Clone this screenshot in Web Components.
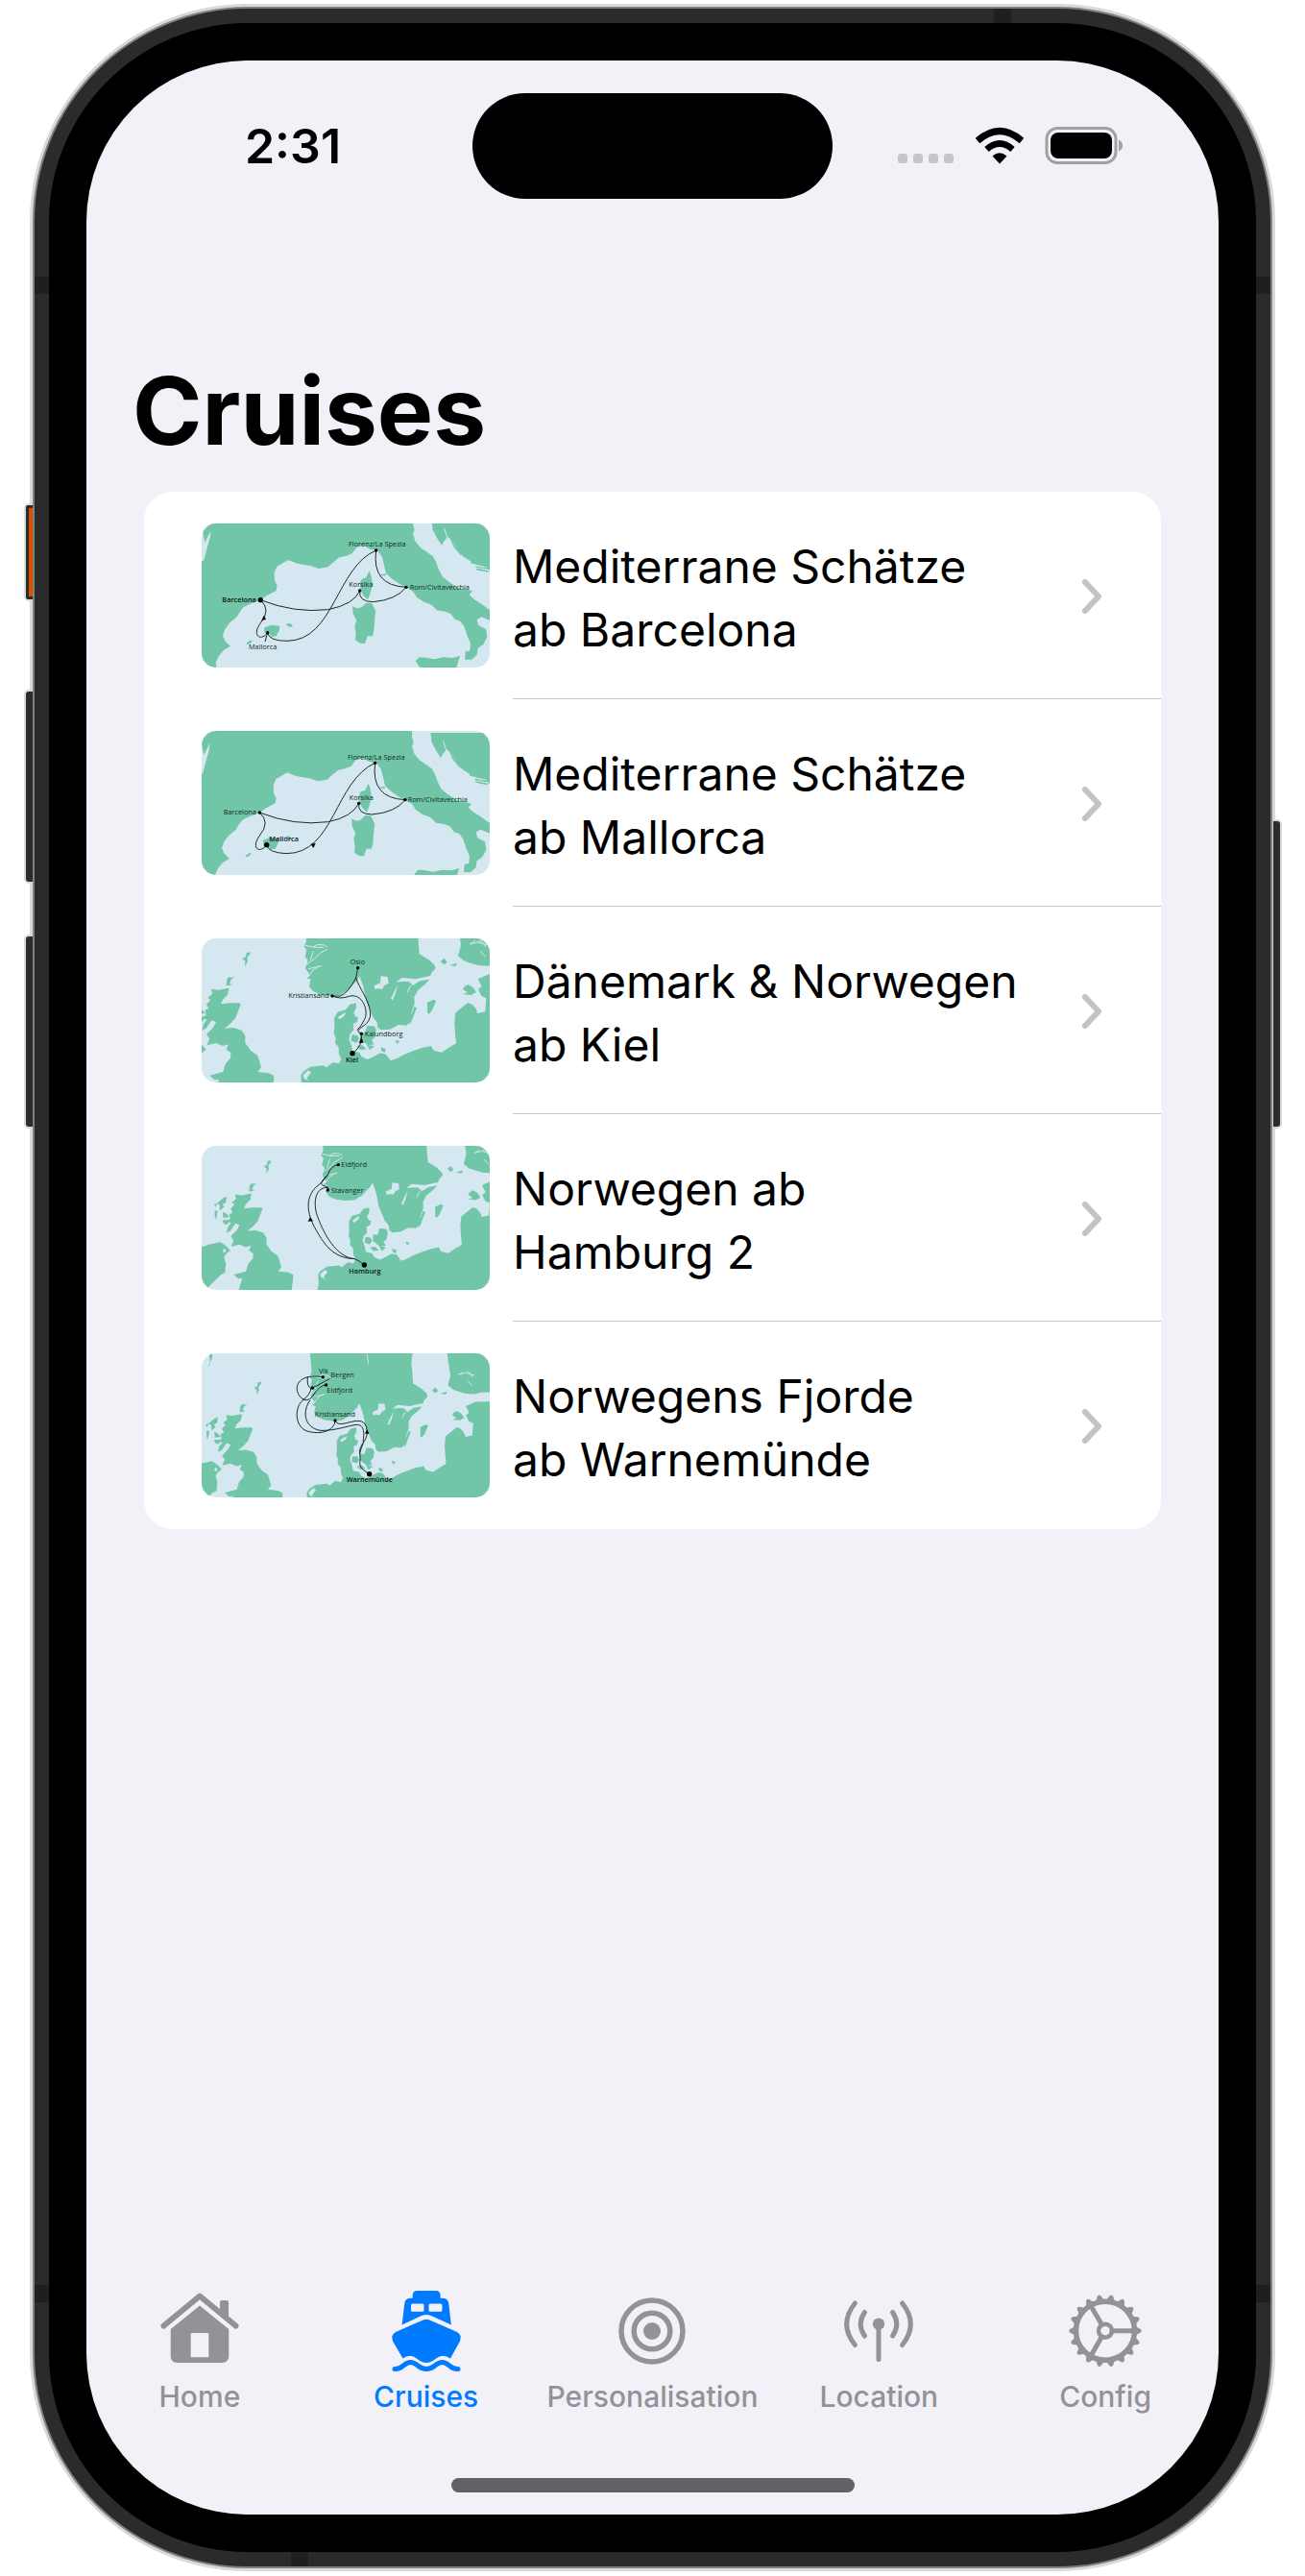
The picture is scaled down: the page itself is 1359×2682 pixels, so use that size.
<!DOCTYPE html>
<html lang="de">
<head>
<meta charset="utf-8">
<meta name="viewport" content="width=device-width, initial-scale=1">
<title>Cruises</title>
<style>
  body { margin: 0; background: #fff; color: #000; font-family: Inter, "Liberation Sans", sans-serif; }
</style>
</head>
<body>
<phone-frame>
  <status-bar slot="status">2:31</status-bar>
  <cruise-page heading="Cruises">
    <cruise-row map="barcelona">Mediterrane Schätze<br>ab Barcelona</cruise-row>
    <cruise-row map="mallorca">Mediterrane Schätze<br>ab Mallorca</cruise-row>
    <cruise-row map="kiel">Dänemark &amp; Norwegen<br>ab Kiel</cruise-row>
    <cruise-row map="hamburg">Norwegen ab<br>Hamburg 2</cruise-row>
    <cruise-row map="warnemuende">Norwegens Fjorde<br>ab Warnemünde</cruise-row>
  </cruise-page>
  <tab-bar slot="tabs">
    <tab-item icon="home">Home</tab-item>
    <tab-item icon="ship" active>Cruises</tab-item>
    <tab-item icon="target">Personalisation</tab-item>
    <tab-item icon="antenna">Location</tab-item>
    <tab-item icon="gear">Config</tab-item>
  </tab-bar>
</phone-frame>
<script>
function component(name, render) {
  customElements.define(name, class extends HTMLElement {
    constructor() {
      super();
      this.attachShadow({ mode: 'open' });
    }
    connectedCallback() {
      this.shadowRoot.innerHTML = render(this);
    }
  });
}

component('phone-frame', () => `
  <style>
    :host { display: flex; box-sizing: border-box; min-height: 100vh; padding: 9px 36px 10px; }
    .body { position: relative; flex: 1; display: flex; border: 15px solid #2b2b2b; border-radius: 222px; background: #2b2b2b;
      box-shadow: 0 0 0 2px #808080, 0 0 0 5px #d8dada; }
    .bezel { flex: 1; display: flex; padding: 39px; background: #000; border-radius: 207px; }
    .screen { flex: 1; min-width: 0; display: flex; flex-direction: column; background: #f2f1f7; border-radius: 168px; overflow: hidden; }
    main { flex: 1; }
    .band { position: absolute; background: #1f1f1f; }
    .side { width: 15px; height: 18px; }
    .cap { width: 18px; height: 15px; }
    .left { left: -15px; } .right { right: -15px; }
    .high { top: 264px; } .low { bottom: 260px; }
    .key { position: absolute; box-sizing: border-box; width: 7px; left: -24px; background: #2b2b2b; border-radius: 3px 0 0 3px; box-shadow: 0 0 0 2px #d8dada; clip-path: inset(-3px 0 -3px -3px); }
    .action { top: 502px; height: 98px; border: solid #2b2b2b; border-width: 3px 0 3px 3px; background: #d45500; }
    .up { top: 696px; height: 198px; }
    .down { top: 951px; height: 198px; }
    .power { left: auto; right: -25px; top: 831px; height: 318px; border-radius: 0 3px 3px 0; clip-path: inset(-3px -3px -3px 0); }
  </style>
  <div class="body">
    <i class="band side left high"></i><i class="band side right high"></i>
    <i class="band side left low"></i><i class="band side right low"></i>
    <i class="band cap" style="top:-15px;right:255px"></i><i class="band cap" style="bottom:-15px;left:252px"></i>
    <i class="key action"></i><i class="key up"></i><i class="key down"></i><i class="key power"></i>
    <div class="bezel"><div class="screen">
      <slot name="status"></slot><main><slot></slot></main><slot name="tabs"></slot>
    </div></div>
  </div>`);

component('status-bar', () => `
  <style>
    :host { display: grid; grid-template-columns: 1fr 375px 1fr; align-items: center; padding-top: 34px; }
    time { padding-left: 28px; text-align: center; font-size: 50px; line-height: 60px; font-weight: 600; }
    .island { height: 110px; border-radius: 55px; background: #000; }
    svg { display: block; justify-self: center; margin-right: 34px; }
  </style>
  <time><slot></slot></time>
  <div class="island"></div>
  <svg width="240" height="42" viewBox="0 0 240 42" aria-hidden="true">
    <g fill="#c4c4c9"><rect x="4" y="29" width="10" height="10" rx="3"/><rect x="20" y="29" width="10" height="10" rx="3"/><rect x="36" y="29" width="10" height="10" rx="3"/><rect x="52" y="29" width="10" height="10" rx="3"/></g>
    <path d="M110 39.500 L102.500 31.500 Q110 25 117.500 31.500 Z"/>
    <path d="M96.500 24.500 Q110 12.500 123.500 24.500" fill="none" stroke="#000" stroke-width="6.500"/>
    <path d="M87 15.500 Q110 -4.500 133 15.500" fill="none" stroke="#000" stroke-width="7"/>
    <rect x="159" y="2.500" width="72" height="36" rx="11" fill="none" stroke="#a0a0a5" stroke-width="3"/>
    <rect x="163" y="7" width="64" height="27" rx="8"/>
    <path d="M234 14.500 Q238 16 238 20.500 Q238 25 234 26.500 Z" fill="#a0a0a5"/>
  </svg>`);

component('cruise-page', el => `
  <style>
    :host { display: block; padding-top: 161px; }
    h1 { margin: 0; padding: 0 48px 24px; font-size: 98px; line-height: 120px; font-weight: 700; }
    .card { display: grid; margin: 0 60px; background: #fff; border-radius: 30px; overflow: hidden; }
  </style>
  <h1>${el.getAttribute('heading')}</h1>
  <div class="card"><slot></slot></div>`);

component('cruise-row', el => `
  <style>
    :host { display: block; --line: #c8c8cb; }
    :host(:last-child) { --line: transparent; }
    a { display: flex; gap: 24px; padding-left: 60px; height: 216px; color: inherit; text-decoration: none; }
    route-map { align-self: center; }
    .text { flex: 1; display: flex; align-items: center; justify-content: space-between; padding: 2px 60px 0 0; border-bottom: 1px solid var(--line);
      font-size: 48px; line-height: 66px; }
    .name { padding-top: 4px; }
  </style>
  <a href="#${el.getAttribute('map')}">
    <route-map name="${el.getAttribute('map')}"></route-map>
    <span class="text"><span class="name"><slot></slot></span>
      <svg width="24" height="40" viewBox="0 0 24 40" aria-hidden="true"><path d="M5 5 L19 20 L5 35" fill="none" stroke="#c3c3c6" stroke-width="6" stroke-linecap="round" stroke-linejoin="round"/></svg>
    </span>
  </a>`);

/* Coastlines are kept once per region; each route shifts and scales them. */
const med = `
  <g fill="#72c6a8" stroke="none">
  <path d="M20 -10H690V33L695 50L690 62L697 85L713 105L735 120L752 132L762 150L770 172L782 196L803 213L830 230L855 236L876 241L866 253L880 266L905 282L925 297L950 312V352L935 335L905 322L890 330L895 348L918 360L922 385L910 408L893 420L890 440L874 455L852 456L854 430L868 428L870 405L860 382L850 352L838 335L822 330L808 312L790 305L765 301L748 284L722 274L702 260L690 242L668 229L645 217L625 203L606 185L600 160L594 135L580 115L556 110L535 99L515 104L500 124L480 132L460 136L440 152L425 166L395 171L370 162L345 158L325 154L301 144L285 153L265 165L257 182L258 208L266 224L263 240L232 256L213 270L185 280L160 292L148 308L140 322L118 340L103 360L96 380L104 398L120 413L98 426L84 444L74 465L80 500H20V152L37 145L46 110L56 75L60 45L70 32L55 60L40 90Z"/>
  <path d="M748 20H960V182L932 180L918 164L888 158L870 148L848 134L828 110L817 88L800 72L788 84L780 98L765 75L752 50Z"/>
  <path d="M554 178L560 195L564 222L556 250L549 268L537 257L527 240L524 217L530 204L544 199Z"/>
  <path d="M501 288L515 295L530 292L544 278L561 279L574 304L571 325L568 365L564 382L548 382L540 405L525 404L510 394L512 375L508 350L514 333L503 311Z"/>
  <path d="M225 356L246 347L274 350L272 365L263 382L249 384L238 370L227 373ZM292 345L307 342L315 352L305 354ZM170 404L182 395L188 396L182 405L171 408Z"/>
  <path d="M698 460L710 448L730 449L755 454L785 448L814 450L838 443L832 460L820 500H770L745 480L712 480ZM590 190L605 187L606 193L590 193Z"/>
  </g>
  <g fill="none" stroke="#72c6a8" stroke-width="5"><path d="M785 42L796 62L808 75L820 103L842 128M800 47L812 67M833 118L852 127M870 151L916 163M887 165L925 171M889 173L926 180M68 35L82 58"/></g>
  <g fill="none" stroke="#d5e7f1" stroke-width="3"><path d="M788 45L803 95M865 155L912 167"/></g>`;
const north = `
  <g fill="#72c6a8" stroke="none">
  <path d="M115 188L82 194L60 191L63 207L49 218L58 225L45 239L52 253L40 257L44 272L33 282L46 287L35 302L31 320L44 314L61 289L75 294L66 311L45 332L55 346L46 367L75 360L96 369L114 364L107 380L121 390L120 407L104 425L97 450L75 456L55 461L70 475L84 473L70 520H250L255 480L256 462L240 454L205 450L216 436L210 415L204 398L183 383L166 359L166 337L155 320L130 312L101 314L119 300L136 281L152 240L149 235L117 235L90 238L96 224L111 209Z"/>
  <path d="M-53 369L-25 359L10 352L28 363L44 380L31 390L23 402L29 425L26 455L12 462L-31 504H-80V370Z"/>
  <path d="M350 -40H710L704 12L707 40L710 82L724 90L740 100L756 115L761 126L748 140L745 150L719 155L700 160L655 156L642 166L678 168L690 180L712 166L742 161L728 176L706 194L694 215L695 238L685 265L688 287L670 305L644 303L618 317L590 319L580 311L578 294L565 280L555 255L544 230L541 210L534 180L523 150L516 165L505 175L488 195L462 210L430 212L400 208L377 198L366 182L371 160L359 158L368 147L354 127L362 103L353 91L358 68L349 59L357 42Z"/>
  <path d="M826 -40H1000V116L980 112L945 113L925 119L894 117L870 110L849 103L831 88L840 55Z"/>
  <path d="M512 235L513 250L505 265L511 278L519 279L515 295L503 300L505 319L494 331L490 347L498 368L501 385L522 389L530 403L548 411L568 402L588 391L606 395L620 415L640 408L660 397L690 385L718 375L747 369L755 383L780 389L802 374L825 361L822 332L820 296L823 266L840 251L862 234L875 239L887 252L892 267L916 262L919 220L904 213L894 192L905 183L893 160L928 145L1000 144V530H335L342 490L340 460L350 447L370 434L410 430L420 436L440 420L459 424L466 409L459 395L458 373L447 360L449 345L443 330L445 310L444 282L455 263L480 256L493 239Z"/>
  <path d="M500 334L517 336L522 348L514 359L496 353ZM526 325L540 328L548 305L570 308L575 319L571 342L561 351L568 364L550 367L534 355L524 347ZM514 370L533 367L545 379L527 382ZM545 365L570 370L555 382ZM735 233L755 224L762 229L750 257L740 270L735 263ZM694 247L702 250L683 298L678 302L685 272ZM845 191L862 177L877 185L888 201L872 210L846 207L861 202ZM849 183L863 179L866 186L854 188ZM776 105L788 95L797 108L787 115ZM805 116L828 110L824 120ZM635 350L649 354L640 363ZM590 373L605 379L602 390L592 385Z"/>
  <path d="M180 76L182 80L172 94L174 104L165 122L166 104L157 96L168 91L170 78ZM116 153L121 155L133 154L122 162L117 174L127 178L107 181L109 161ZM20 203L31 198L28 220L17 223L23 233L8 246L8 227L-2 221ZM18 249L31 256L41 267L20 270ZM17 277L39 277L35 292L22 290ZM-9 246H1L-4 275L-8 269ZM-12 225L-2 220L-5 234ZM10 -31L14 -38L0 -30L4 14L-6 27L12 -8Z"/>
  </g>
  <g fill="#d5e7f1" stroke="none"><path d="M569 181L588 172L590 151L611 153L614 173L600 181L595 191L578 190L571 193ZM621 222L632 198L643 177L635 207L626 226ZM455 279L480 263L476 275L462 286ZM347 460L363 445L372 452L358 470L365 479L350 470ZM18 380L24 373L30 382L22 388Z"/></g>
  <g fill="none" stroke="#d5e7f1" stroke-width="3"><path d="M350 54L378 60L393 52L412 54L422 61M378 61L411 61M357 115L381 98L398 80L422 67M370 100L379 72M363 154L378 132L397 119M363 128L405 119M867 50L885 47L903 40L918 60M870 52L884 40M895 46L924 53M901 73L915 90M640 168L680 163L700 167M683 180L672 202M550 -20L555 15"/></g>`;

const routes = {
  barcelona: { view: '30 30 900 450', land: med, shift: 'translate(0 0)',
    lines: 'M214 269Q320 311 425 299Q506 283 524 240M524 240Q519 274 565 275Q638 269 669 229M669 229Q560 224 575 114M575 114C450 166 445 395 297 397Q240 397 236 371M236 371C217 399 184 382 214 341Q248 299 214 269M236 371L228 399',
    dots: [[524,240],[669,229],[575,114],[236,371]], hub: [214,269], arrow: 'M217 334L224 318L231 329Z',
    labels: [['Florenz/La Spezia',489,103],['Korsika',490,229],['Rom/Civitavecchia',680,238],['Mallorca',177,423],['Barcelona',94,275,1]] },
  mallorca: { view: '30 33 900 450', land: med, shift: 'translate(-3 19)',
    lines: 'M211 288Q320 331 425 317Q500 302 521 259M521 259Q516 293 562 294Q635 288 666 248M666 248Q557 243 572 133M572 133C445 190 445 416 294 416Q237 413 233 389M233 389C214 417 181 402 211 360Q246 318 211 288',
    dots: [[521,259],[666,248],[572,133],[211,288]], hub: [233,389], arrow: 'M371 386L386 384L379 399Z',
    labels: [['Florenz/La Spezia',486,123],['Korsika',491,249],['Rom/Civitavecchia',674,256],['Barcelona',98,294],['Mallorca',241,378,1]] },
  kiel: { view: '30 33 900 450', land: north, shift: 'translate(0 0)',
    lines: 'M518 125L512 156Q488 204 463 213L438 213Q462 224 490 214C532 202 553 258 539 286Q528 309 516 319M512 156C522 190 552 220 557 266C560 305 515 311 519 324L529 332L529 352Q524 376 501 392',
    dots: [[518,125],[438,213],[529,331]], hub: [501,392], arrow: 'M521 359L529 343L536 359Z',
    labels: [['Oslo',494,113],['Kristiansand',301,220],['Kalundborg',539,338],['Kiel',480,419,1]] },
  hamburg: { view: '30 33 900 450', land: north, shift: 'translate(79 8) scale(.926)',
    lines: 'M457 92Q434 95 424 123Q409 147 386 163C351 200 362 247 382 286C410 336 437 384 508 386Q522 391 538 405M424 123Q397 149 406 155L424 163V171M424 163C377 162 380 227 393 256C411 306 450 381 508 386',
    dots: [[457,92],[424,171]], hub: [538,405], arrow: 'M362 269L369 256L378 268Z',
    labels: [['Eidfjord',466,99],['Stavanger',434,179],['Hamburg',490,433,1]] },
  warnemuende: { view: '30 33 900 450', land: north, shift: 'translate(53 54) scale(.898)',
    lines: 'M409 107C323 94 314 147 342 173Q360 187 376 168Q399 130 419 132M376 141L431 113M361 106Q358 138 371 141Q373 158 345 181C319 201 319 270 367 278C414 288 446 269 447 243C456 265 488 246 515 244Q546 241 547 280C547 307 520 321 524 345C530 379 510 384 554 410M369 179C344 214 349 263 399 274C448 276 489 258 514 256C547 256 533 299 535 313Q527 332 524 345',
    dots: [[409,107],[419,132],[376,141],[447,243]], hub: [554,410], arrow: 'M540 284L547 271L553 284Z',
    labels: [['Vik',396,97],['Bergen',433,107],['Eidfjord',421,156],['Kristiansand',383,232],['Warnemünde',482,434,1]] }
};

component('route-map', el => {
  const r = routes[el.getAttribute('name')];
  return `
  <style>
    :host { display: block; width: 300px; height: 150px; flex: none; border-radius: 15px; overflow: hidden; background: #d5e7f1; }
    svg { display: block; }
    text { font-family: "Open Sans", sans-serif; font-size: 22px; fill: #0f2820; }
    .b { font-weight: 600; fill: #081410; }
  </style>
  <svg width="300" height="150" viewBox="${r.view}">
    <g transform="${r.shift}">${r.land}</g>
    <path d="${r.lines}" fill="none" stroke="#1c2a2a" stroke-width="3"/>
    <path d="${r.arrow}"/>
    ${r.dots.map(d => `<circle cx="${d[0]}" cy="${d[1]}" r="5"/>`).join('')}
    <circle cx="${r.hub[0]}" cy="${r.hub[1]}" r="8"/>
    ${r.labels.map(l => `<text x="${l[1]}" y="${l[2]}"${l[3] ? ' class="b"' : ''}>${l[0]}</text>`).join('')}
  </svg>`;
});

const teeth = Array.from({ length: 18 }, (_, i) => `<path d="M81 41 L86.500 43.700 Q89 45.700 86.500 47.700 L81 50.500 Z" transform="rotate(${i * 20} 50 45.700)"/>`).join('');
const line = 'fill="none" stroke="currentColor" stroke-linecap="round" stroke-linejoin="round"';
const icons = {
  home: `<path d="M12.500 40.500 L50 9.500 L87.500 40.500" ${line} stroke-width="6"/>
    <path d="M71 24V16Q71 14 73 14H78Q80 14 80 16V35L71 28Z"/>
    <path fill-rule="evenodd" d="M50 19.500 L80.300 44V72Q80.300 79 73 79H27Q19.700 79 19.700 72V44ZM42 48Q40.700 48 40.700 49.300V73.300H59.300V49.300Q59.300 48 58 48Z"/>`,
  ship: `<path fill-rule="evenodd" d="M24.600 39.500 L27.300 17 Q28 12 33 11.700 H35.700 V9 Q35.700 4 40.500 4 H60 Q64.600 4 64.600 9 V11.700 H67.500 Q72.500 12 73.200 17 L75.900 39.500 L55 30 Q50 28 45 30 ZM35.500 17.500Q34 17.500 34 19V24.200Q34 25.700 35.500 25.700H46Q47.500 25.700 47.500 24.200V19Q47.500 17.500 46 17.500ZM54 17.500Q52.500 17.500 52.500 19V24.200Q52.500 25.700 54 25.700H65Q66.400 25.700 66.400 24.200V19Q66.400 17.500 65 17.500Z"/>
    <path d="M46 34.800 Q50 32.800 54 34.800 L81 46.500 Q87.500 49.500 85 56.500 L75 74.500 Q67 69 59.500 75 Q54.500 79 50 79 Q45.500 79 40.500 75 Q33 69 25.500 74.500 L15 56.500 Q12.500 49.500 19 46.500 Z"/>
    <path d="M17 85.500 C26 86 26 78.500 33.500 78.500 S41 85.500 50 85.500 S59 78.500 66.500 78.500 S74 86 83 85.500" ${line} stroke-width="5"/>`,
  target: `<circle cx="50" cy="46" r="32" ${line} stroke-width="5.500"/><circle cx="50" cy="46" r="18.800" ${line} stroke-width="5.500"/><circle cx="50" cy="46" r="9"/>`,
  antenna: `<circle cx="50" cy="38.700" r="6.200"/><path d="M50 39V75.500M35.400 26.500Q27 38.700 35.400 51M64.600 26.500Q73 38.700 64.600 51M25.400 17Q8 38.700 25.400 60.500M74.600 17Q92 38.700 74.600 60.500" ${line} stroke-width="5"/>`,
  gear: `${teeth}<circle cx="50" cy="45.700" r="30.500" ${line} stroke-width="5.500"/><circle cx="50" cy="45.700" r="7" ${line} stroke-width="4.500"/>
    <path d="M57 45.700H80M46.500 39.600L35 19.700M46.500 51.800L35 71.700" ${line} stroke-width="5"/>`
};

component('tab-item', el => `
  <style>
    :host { display: block; flex: 1 1 0; min-width: 0; }
    a { display: flex; flex-direction: column; align-items: center; gap: 6px; color: ${el.hasAttribute('active') ? '#007aff' : '#929398'}; text-decoration: none;
      font-size: 30px; line-height: 36px; font-weight: 500; }
    svg { display: block; }
  </style>
  <a href="#${el.getAttribute('icon')}"${el.hasAttribute('active') ? ' aria-current="page"' : ''}>
    <svg width="100" height="90" viewBox="0 0 100 90" fill="currentColor" aria-hidden="true">${icons[el.getAttribute('icon')]}</svg>
    <span><slot></slot></span>
  </a>`);

component('tab-bar', () => `
  <style>
    :host { display: block; padding-bottom: 23px; }
    nav { display: flex; }
    .grip { width: 420px; height: 15px; margin: 67px auto 0; border-radius: 8px; background: #626165; }
  </style>
  <nav><slot></slot></nav>
  <div class="grip"></div>`);
</script>
</body>
</html>
